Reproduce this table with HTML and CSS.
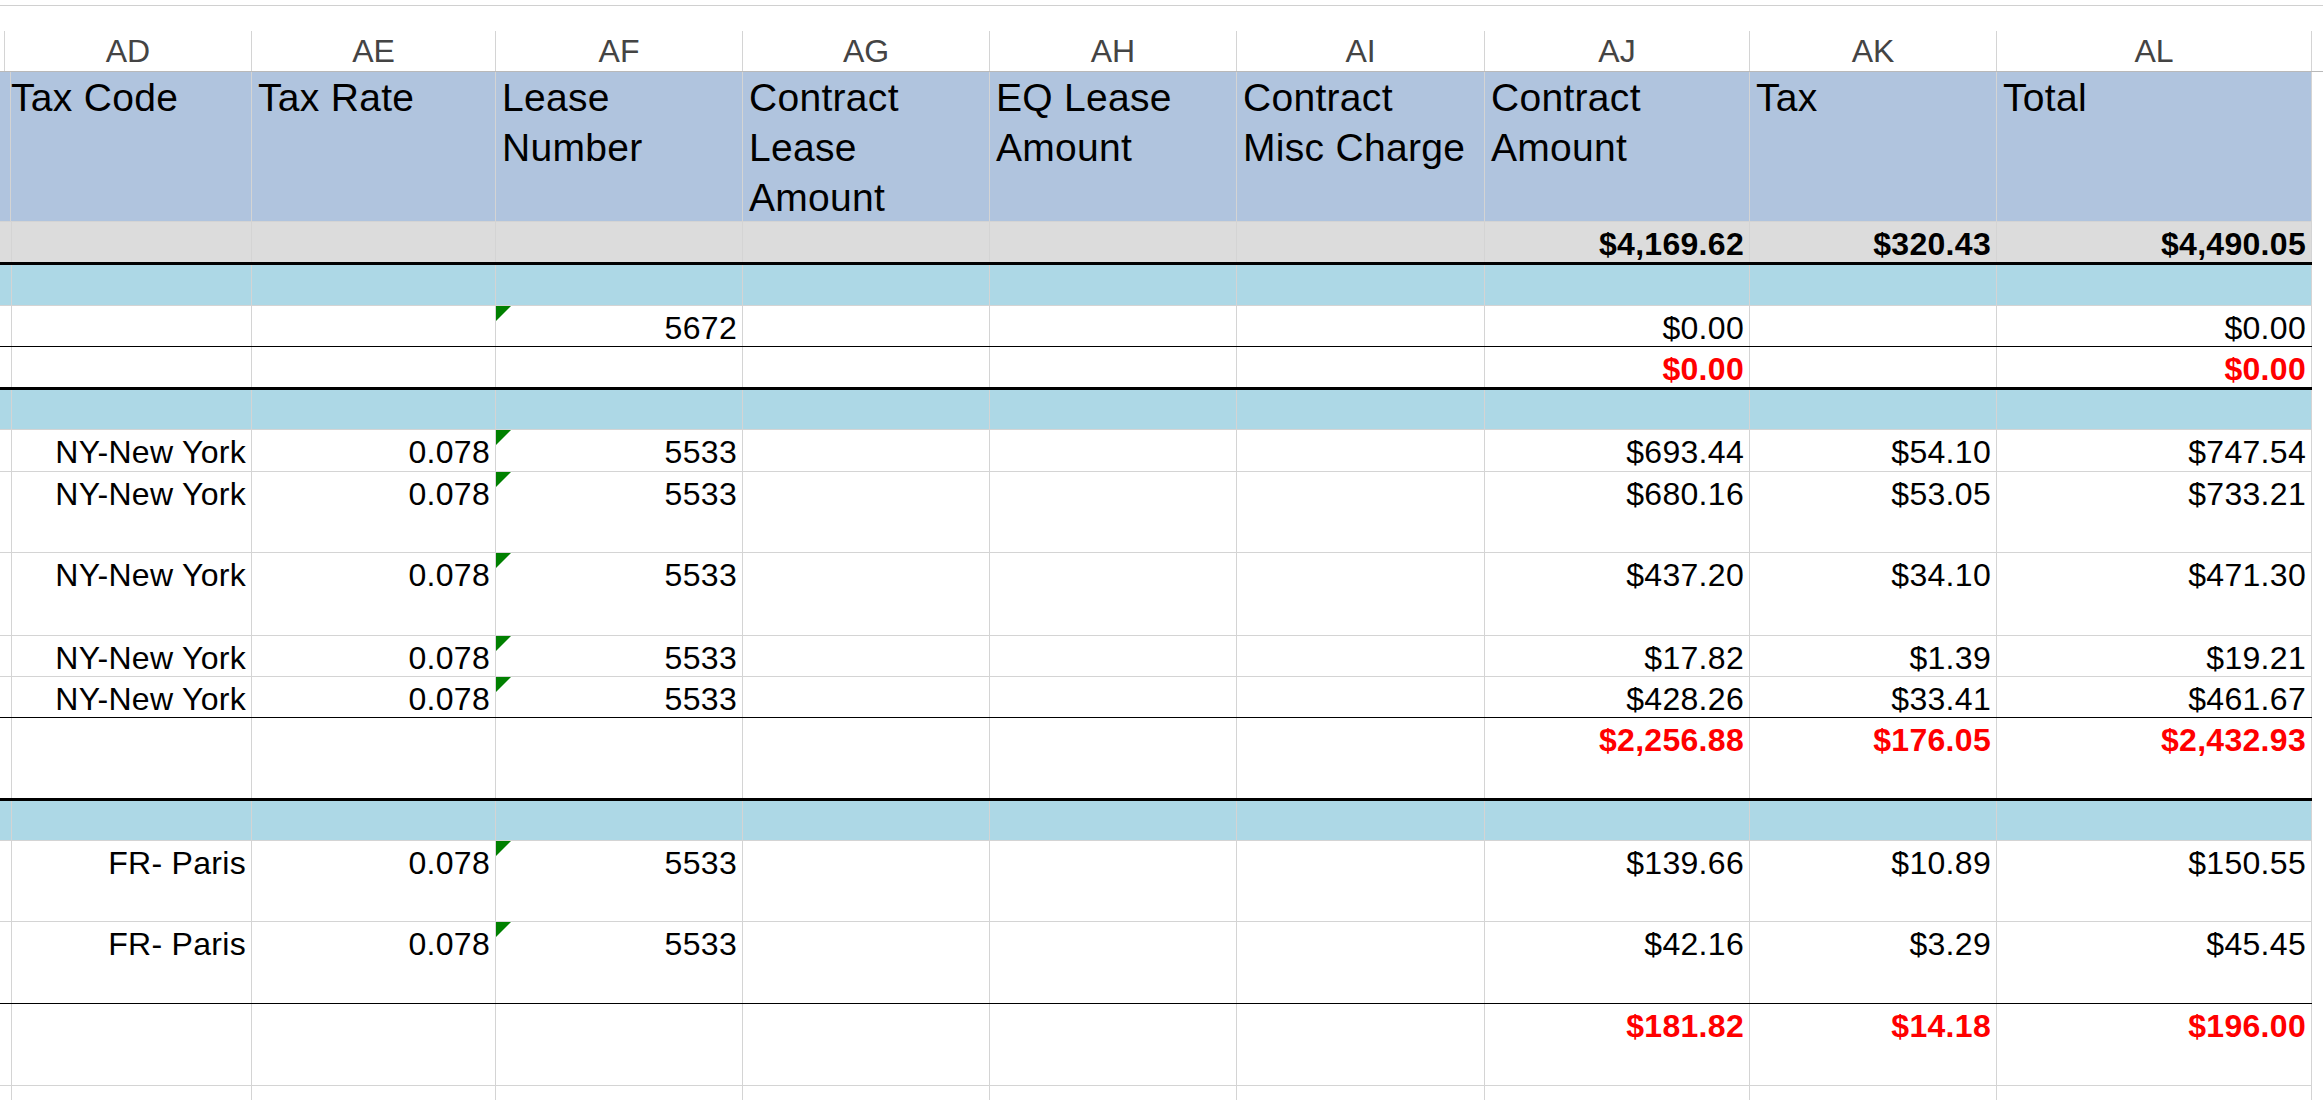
FILE: index.html
```html
<!DOCTYPE html>
<html lang="en">
<head>
<meta charset="utf-8">
<title>Tax sheet</title>
<link rel="stylesheet" href="styles.css">
</head>
<body>
<div class="topline"></div>
<div class="sheet">
  <div class="row letters">
    <div class="c"></div><div class="c">AD</div><div class="c">AE</div><div class="c">AF</div><div class="c">AG</div><div class="c">AH</div><div class="c">AI</div><div class="c">AJ</div><div class="c">AK</div><div class="c">AL</div><div class="c"></div>
  </div>
  <div class="row head">
    <div class="c"></div>
    <div class="c">Tax Code</div>
    <div class="c">Tax Rate</div>
    <div class="c">Lease<br>Number</div>
    <div class="c">Contract<br>Lease<br>Amount</div>
    <div class="c">EQ Lease<br>Amount</div>
    <div class="c">Contract<br>Misc Charge</div>
    <div class="c">Contract<br>Amount</div>
    <div class="c">Tax</div>
    <div class="c">Total</div>
  </div>
  <div class="row grand thick r43">
    <div class="c"></div><div class="c"></div><div class="c"></div><div class="c"></div><div class="c"></div><div class="c"></div><div class="c"></div>
    <div class="c num b">$4,169.62</div><div class="c num b">$320.43</div><div class="c num b">$4,490.05</div>
  </div>
  <div class="row band r41">
    <div class="c"></div><div class="c"></div><div class="c"></div><div class="c"></div><div class="c"></div><div class="c"></div><div class="c"></div><div class="c"></div><div class="c"></div><div class="c"></div>
  </div>
  <div class="row rule r41">
    <div class="c"></div><div class="c"></div><div class="c"></div><div class="c num flag">5672</div><div class="c"></div><div class="c"></div><div class="c"></div>
    <div class="c num">$0.00</div><div class="c"></div><div class="c num">$0.00</div>
  </div>
  <div class="row thick r43">
    <div class="c"></div><div class="c"></div><div class="c"></div><div class="c"></div><div class="c"></div><div class="c"></div><div class="c"></div>
    <div class="c num b red">$0.00</div><div class="c"></div><div class="c num b red">$0.00</div>
  </div>
  <div class="row band r40">
    <div class="c"></div><div class="c"></div><div class="c"></div><div class="c"></div><div class="c"></div><div class="c"></div><div class="c"></div><div class="c"></div><div class="c"></div><div class="c"></div>
  </div>
  <div class="row r42">
    <div class="c"></div><div class="c num">NY-New York</div><div class="c num">0.078</div><div class="c num flag">5533</div><div class="c"></div><div class="c"></div><div class="c"></div>
    <div class="c num">$693.44</div><div class="c num">$54.10</div><div class="c num">$747.54</div>
  </div>
  <div class="row r81">
    <div class="c"></div><div class="c num">NY-New York</div><div class="c num">0.078</div><div class="c num flag">5533</div><div class="c"></div><div class="c"></div><div class="c"></div>
    <div class="c num">$680.16</div><div class="c num">$53.05</div><div class="c num">$733.21</div>
  </div>
  <div class="row r83">
    <div class="c"></div><div class="c num">NY-New York</div><div class="c num">0.078</div><div class="c num flag">5533</div><div class="c"></div><div class="c"></div><div class="c"></div>
    <div class="c num">$437.20</div><div class="c num">$34.10</div><div class="c num">$471.30</div>
  </div>
  <div class="row r41">
    <div class="c"></div><div class="c num">NY-New York</div><div class="c num">0.078</div><div class="c num flag">5533</div><div class="c"></div><div class="c"></div><div class="c"></div>
    <div class="c num">$17.82</div><div class="c num">$1.39</div><div class="c num">$19.21</div>
  </div>
  <div class="row rule r41">
    <div class="c"></div><div class="c num">NY-New York</div><div class="c num">0.078</div><div class="c num flag">5533</div><div class="c"></div><div class="c"></div><div class="c"></div>
    <div class="c num">$428.26</div><div class="c num">$33.41</div><div class="c num">$461.67</div>
  </div>
  <div class="row thick r83">
    <div class="c"></div><div class="c"></div><div class="c"></div><div class="c"></div><div class="c"></div><div class="c"></div><div class="c"></div>
    <div class="c num b red">$2,256.88</div><div class="c num b red">$176.05</div><div class="c num b red">$2,432.93</div>
  </div>
  <div class="row band r40">
    <div class="c"></div><div class="c"></div><div class="c"></div><div class="c"></div><div class="c"></div><div class="c"></div><div class="c"></div><div class="c"></div><div class="c"></div><div class="c"></div>
  </div>
  <div class="row r81">
    <div class="c"></div><div class="c num">FR- Paris</div><div class="c num">0.078</div><div class="c num flag">5533</div><div class="c"></div><div class="c"></div><div class="c"></div>
    <div class="c num">$139.66</div><div class="c num">$10.89</div><div class="c num">$150.55</div>
  </div>
  <div class="row rule r82">
    <div class="c"></div><div class="c num">FR- Paris</div><div class="c num">0.078</div><div class="c num flag">5533</div><div class="c"></div><div class="c"></div><div class="c"></div>
    <div class="c num">$42.16</div><div class="c num">$3.29</div><div class="c num">$45.45</div>
  </div>
  <div class="row r82">
    <div class="c"></div><div class="c"></div><div class="c"></div><div class="c"></div><div class="c"></div><div class="c"></div><div class="c"></div>
    <div class="c num b red">$181.82</div><div class="c num b red">$14.18</div><div class="c num b red">$196.00</div>
  </div>
  <div class="row r41">
    <div class="c"></div><div class="c"></div><div class="c"></div><div class="c"></div><div class="c"></div><div class="c"></div><div class="c"></div><div class="c"></div><div class="c"></div><div class="c"></div>
  </div>
</div>
</body>
</html>
```

FILE: styles.css
```css
* {
  box-sizing: border-box;
}

html,
body {
  margin: 0;
  padding: 0;
  overflow: hidden;
  background: #ffffff;
}

body {
  font-family: "Liberation Sans", Arial, sans-serif;
  color: #000000;
}

.topline {
  height: 6px;
  border-bottom: 1px solid #d0d0d0;
  margin-bottom: 25px;
}

.sheet {
  display: flex;
  flex-direction: column;
}

.row {
  display: grid;
  grid-template-columns: 5px 247px 244px 247px 247px 247px 248px 265px 247px 315px;
  width: 2312px;
  height: 41px;
  border-bottom: 1px solid #d4d4d4;
  flex: none;
}

.c {
  position: relative;
  border-right: 1px solid #d4d4d4;
  padding: 4px 5px 0 6px;
  font-size: 32px;
  letter-spacing: 0.3px;
  line-height: 36px;
  white-space: nowrap;
  overflow: hidden;
}

.letters {
  grid-template-columns: 5px 247px 244px 247px 247px 247px 248px 265px 247px 315px 11px;
  width: 2323px;
  border-bottom-color: #b9b9b9;
}

.letters .c {
  padding: 0;
  text-align: center;
  font-size: 32px;
  letter-spacing: 0;
  line-height: 40px;
  color: #444444;
}

.letters .c:last-child {
  border-right: none;
}

.head {
  height: 150px;
  background: #b0c4de;
}

.head .c {
  padding: 1px 4px 0 6px;
  font-size: 39px;
  letter-spacing: 0.3px;
  line-height: 50px;
}

.grand {
  background: #dcdcdc;
}

.band {
  background: #add8e6;
}

.r40 { height: 40px; }
.r41 { height: 41px; }
.r42 { height: 42px; }
.r43 { height: 43px; }
.r81 { height: 81px; }
.r82 { height: 82px; }
.r83 { height: 83px; }

.rule {
  border-bottom-color: #000000;
}

.thick {
  border-bottom: 3px solid #000000;
}

.num {
  text-align: right;
}

.b {
  font-weight: bold;
}

.red {
  color: #ff0000;
}

.flag::before {
  content: "";
  position: absolute;
  top: 0;
  left: 0;
  width: 0;
  height: 0;
  border-top: 15px solid #008000;
  border-right: 15px solid transparent;
}
```
